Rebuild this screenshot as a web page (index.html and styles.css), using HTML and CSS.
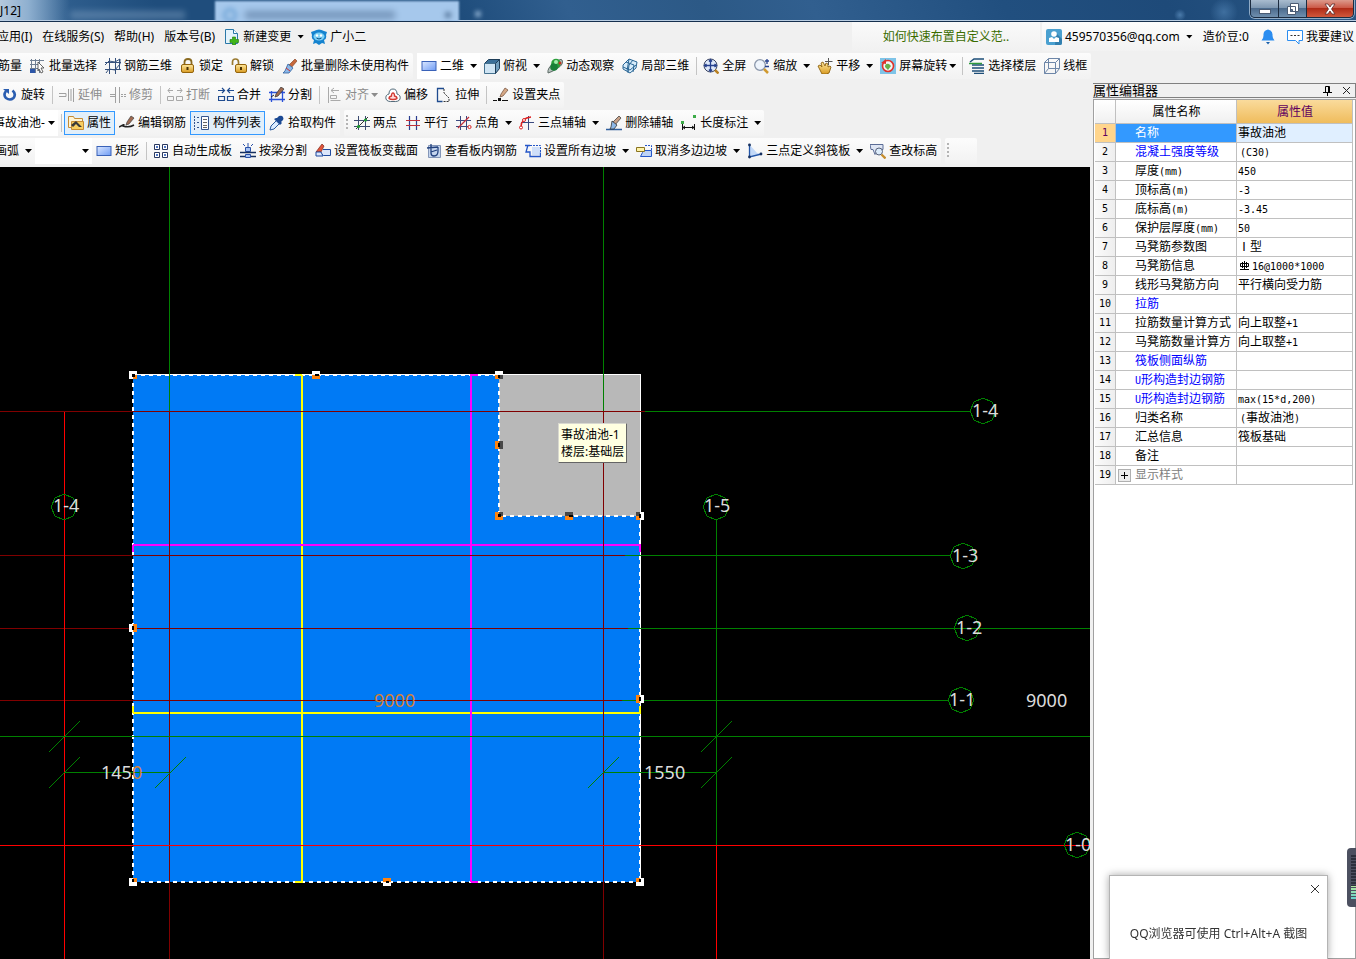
FILE: index.html
```html
<!DOCTYPE html>
<html lang="zh-CN">
<head>
<meta charset="utf-8">
<title>属性编辑器</title>
<link rel="stylesheet" href="styles.css">
</head>
<body>
<svg class="sprite" aria-hidden="true">
  <defs>
    <linearGradient id="blueFill" x1="0" y1="0" x2="1" y2="1"><stop offset="0" stop-color="#dce8ff"/><stop offset="1" stop-color="#6f9cf5"/></linearGradient>
    <linearGradient id="goldFill" x1="0" y1="0" x2="0" y2="1"><stop offset="0" stop-color="#ffe9a0"/><stop offset="1" stop-color="#d89a20"/></linearGradient>
    <path id="axisMark" d="M0-13L9-9 13 0 9 9 0 13-9 9-13 0-9-9z"/>
  </defs>
  <symbol id="newdoc" viewBox="0 0 16 16"><path d="M1.500 .5h8l4 4v10h-12z" fill="#e4f3fc" stroke="#2a78a8"/><path d="M9.500 .5v4h4" fill="#fff" stroke="#2a78a8"/><path d="M8.500 8h3v2.500h3v3h-3v2.500h-3v-2.500h-2.500v-3h2.500z" fill="#3fb618" stroke="#1f7a08" stroke-width=".6"/></symbol>
  <symbol id="mascot" viewBox="0 0 16 16"><path d="M0 3l3-1q5-3 10 0l3 1-1 3q1 4-2 5l1 4-3-1-3 2-3-2-3 1 1-4q-3-1-2-5z" fill="#1583cf"/><ellipse cx="8" cy="7.500" rx="5.500" ry="4" fill="#7fd2f6"/><circle cx="6" cy="6.500" r="1.200" fill="#fff"/><circle cx="10" cy="6.500" r="1.200" fill="#fff"/><path d="M5.500 9q2.500 2 5 0" stroke="#084d86" fill="none"/></symbol>
  <symbol id="user" viewBox="0 0 16 16"><rect width="16" height="16" rx="2" fill="#4aa0d0"/><path d="M10 4l6 6v4q0 2-2 2h-5z" fill="#327fae"/><circle cx="8" cy="5" r="2.800" fill="#fff"/><path d="M3 9l3-1 2 2 2-2 3 1v4h-10z" fill="#fff"/></symbol>
  <symbol id="bell" viewBox="0 0 16 16"><path d="M8 .5q5 1 4.500 6 0 3 2 5h-13q2-2 2-5-.5-5 4.500-6z" fill="#2b8df0"/><path d="M6 13h4l-2 2.500z" fill="#1a5faa"/></symbol>
  <symbol id="bubble" viewBox="0 0 16 16"><path d="M.5 1.500h15v10h-3.500v3.500l-3.500-3.500h-8z" fill="#fff" stroke="#2b8df0"/><path d="M3.500 6.500h2m1.500 0h2m1.500 0h2" stroke="#333"/></symbol>
  <symbol id="gridsel" viewBox="0 0 16 16"><path d="M1.500 1v14M5.500 1v14M9.500 1v14M0 2.500h14M0 6.500h9M0 10.500h9" stroke="#6f7f93" fill="none"/><path d="M0 11h5v4h-5z" fill="#2c56a8"/><path d="M8 4l6 6h-3l2 4-2 1-2-4-1 2z" fill="#fff" stroke="#444" stroke-width=".8"/></symbol>
  <symbol id="grid3d" viewBox="0 0 16 16"><path d="M4.500 0v16M10.500 0v16M0 4.500h16M0 11.500h16M1 15l3-4 6 1 5-6v-5l-5 3-6-1-4 4M14.500 1v11" stroke="#36517c" fill="none"/></symbol>
  <symbol id="lock" viewBox="0 0 16 16"><path d="M4.500 8v-4q0-3 3.500-3t3.500 3v4" fill="none" stroke="#8a6a20" stroke-width="1.800"/><rect x="1.500" y="6.500" width="12" height="8" rx="1.500" fill="url(#goldFill)" stroke="#94640c"/><path d="M7.500 9v3" stroke="#4a3204" stroke-width="2"/></symbol>
  <symbol id="unlock" viewBox="0 0 16 16"><path d="M1.500 7v-3q0-3 3-3t3 3v3" fill="none" stroke="#9a7a30" stroke-width="1.700"/><rect x="4.500" y="6.500" width="11" height="8" rx="1.500" fill="url(#goldFill)" stroke="#94640c"/><path d="M10 9v3" stroke="#4a3204" stroke-width="2"/></symbol>
  <symbol id="brush" viewBox="0 0 16 16"><path d="M13 1l2 2-6 7-3-2z" fill="#c7683c" stroke="#7a3a1c" stroke-width=".6"/><path d="M6 6l5 4-4 5h-6l2-2z" fill="#8db8e8" stroke="#2f5f9e" stroke-width=".8"/><path d="M4 10l4 3" stroke="#c33"/></symbol>
  <symbol id="rect" viewBox="0 0 16 16"><rect x="1" y="3.500" width="14" height="9" fill="url(#blueFill)" stroke="#3a62b8"/></symbol>
  <symbol id="cube" viewBox="0 0 16 16"><path d="M.5 5.500l4-4h11l-4 4z" fill="#3a6f98" stroke="#1d3d58"/><path d="M.5 5.500h11v10h-11z" fill="#cfe4f3" stroke="#44718f"/><path d="M11.500 5.500l4-4v9l-4 5z" fill="#6f9dbd" stroke="#1d3d58"/></symbol>
  <symbol id="orbit" viewBox="0 0 16 16"><path d="M1 15q-1-5 6-10t8-3q2 4-4 8t-10 5z" fill="#b9c4c0" stroke="#5d6a66"/><circle cx="9" cy="5.500" r="4.800" fill="#2ca03c"/><circle cx="7" cy="9" r="3.800" fill="#188038"/><circle cx="9" cy="4" r="2" fill="#a0ecac"/><circle cx="13" cy="5" r="1.500" fill="#c53322"/></symbol>
  <symbol id="local3d" viewBox="0 0 16 16"><path d="M1 7l6-6 8 3-1 6-6 5-7-4z" fill="#d8ecfa" stroke="#2a6695"/><path d="M4 4l8 3-1 7M7 1l-2 12M11 2l-4 5-1 8M1 9l7 3 6-5" fill="none" stroke="#2a6695"/></symbol>
  <symbol id="full" viewBox="0 0 16 16"><circle cx="7.500" cy="7.500" r="6.500" fill="#dfe9fa" stroke="#3b4664"/><path d="M7.500 2v11M2 7.500h11M6 3.500l1.500-2 1.500 2M6 11.500l1.500 2 1.500-2M3.500 6l-2 1.500 2 1.500M11.500 6l2 1.500-2 1.500" stroke="#26418f" fill="none" stroke-width="1.300"/><path d="M12 12l3.500 3.500" stroke="#b98224" stroke-width="2.500"/></symbol>
  <symbol id="zoom" viewBox="0 0 16 16"><circle cx="6" cy="7" r="5.300" fill="#eef4fc" stroke="#8b97ab" stroke-width="1.300"/><path d="M10 11l4 4" stroke="#d09a30" stroke-width="2.500"/><path d="M13 1v5M11 3h4M11 8.500h4" stroke="#26418f" stroke-width="1.300"/></symbol>
  <symbol id="hand" viewBox="0 0 16 16"><path d="M1 8l2-1 2 2-1-4 2-1 2 4 1-3 2 1v3l2-1 1 1-2 6q-2 1.500-7 1z" fill="url(#goldFill)" stroke="#8e6210" stroke-width=".9"/><path d="M11.500 0v7M8 3.500h7.500" stroke="#555"/></symbol>
  <symbol id="screenrot" viewBox="0 0 16 16"><rect width="16" height="16" fill="#7ec4e8"/><circle cx="8" cy="8" r="5.500" fill="#f2f6f8" stroke="#e0322b" stroke-width="1.600"/><path d="M5 9q0-4 4-3l2 2-3 4z" fill="#68b048"/><path d="M1 5l5-4v5z" fill="#e0322b"/></symbol>
  <symbol id="floors" viewBox="0 0 16 16"><path d="M1 4l4-3h10M3 7h12M3 10h12M3 13h12M5 15.500h10" stroke="#1d4e78" stroke-width="1.500" fill="none"/><path d="M0 5.500h13" stroke="#2f9a3c" stroke-width="1.500"/></symbol>
  <symbol id="wire" viewBox="0 0 16 16"><path d="M.5 4.500l4-4h11l-4 4zM.5 4.500v11h11v-11M15.500.5v10l-4 5M4.500.5v10h11M4.500 10.500l-4 5" fill="none" stroke="#6d86a8"/></symbol>
  <symbol id="rotate" viewBox="0 0 16 16"><path d="M4 4q-3 4 0 7 4 3 7.500 0 3-4-1-7.500" fill="none" stroke="#2a5db0" stroke-width="2.600"/><path d="M1 2h6v5z" fill="#2a5db0"/></symbol>
  <symbol id="extend" viewBox="0 0 16 16"><path d="M0 6.500h7v3h-7M9.500 2v12M14.500 1v14M12 2v12" stroke="#a0a0a0" fill="none"/></symbol>
  <symbol id="trim" viewBox="0 0 16 16"><path d="M0 7.500h5M0 9.500h5M5.500 0v16M9.500 0v16" stroke="#a0a0a0" fill="none"/><path d="M11 7.500h5M11 9.500h5" stroke="#a0a0a0" stroke-dasharray="2 1"/></symbol>
  <symbol id="break" viewBox="0 0 16 16"><path d="M1 3.500h5M10 3.500h5M3 1L1 3.500 3 6M13 1l2 2.500L13 6M.5 9.500h6v4h-6zM9.500 9.500h6v4h-6z" stroke="#a8a8a8" fill="none"/></symbol>
  <symbol id="merge" viewBox="0 0 16 16"><path d="M0 3.500h6M10 3.500h6M4 1l2.500 2.500L4 6M12 1L9.500 3.500 12 6M.5 9.500h6v4h-6zM9.500 9.500h6v4h-6z" stroke="#1f4b8f" fill="none" stroke-width="1.200"/></symbol>
  <symbol id="split" viewBox="0 0 16 16"><path d="M0 5.500h16M0 12.500h16M2.500 4v11M13.500 4v11" stroke="#2b52d8" stroke-width="1.300" fill="none"/><path d="M12 0l3 2-6 7-3 1 1-3z" fill="#a06a50" stroke="#333" stroke-width=".7"/><path d="M2 10l3-2" stroke="#222"/></symbol>
  <symbol id="align" viewBox="0 0 16 16"><path d="M2.500 0v16" stroke="#aaa"/><path d="M5 3.500h8M8 1L5 3.500 8 6M4.500 8.500h6v3h-6zM4.500 13.500h10" stroke="#aaa" fill="none"/></symbol>
  <symbol id="offset" viewBox="0 0 16 16"><path d="M1 12q-1-4 3-5 0-5 4-5t4 5q4 1 3 5-1 3-7 2.500-6 .5-7-2.500z" fill="#fff" stroke="#536b7a"/><path d="M4 11.500q0-2 2.500-2.500 0-3 1.500-3t1.500 3q2.500.5 2.500 2.500-1 1-4 1t-4-1z" fill="#ffdede" stroke="#d23a33" stroke-width="1.300"/></symbol>
  <symbol id="stretch" viewBox="0 0 16 16"><path d="M8 1.500h-6.500v13h5" fill="none" stroke="#1f4b8f" stroke-width="1.300"/><path d="M8 2v4l5 5v3.500h-6" fill="none" stroke="#333" stroke-dasharray="2 1"/></symbol>
  <symbol id="pen" viewBox="0 0 16 16"><path d="M0 13.500h4M9 13.500h6" stroke="#111"/><path d="M12 1l3 2-5 6-3 1 1-3z" fill="#d5a886" stroke="#6e4a36" stroke-width=".7"/><path d="M5 11h3v3h-3z" fill="#111"/></symbol>
  <symbol id="rebar" viewBox="0 0 16 16"><path d="M0 12q7-4 4-1 6 2 11-1" stroke="#222" stroke-width="1.500" fill="none"/><path d="M12 1l3 2-5 6-3 1 1-3z" fill="#a06a50" stroke="#444" stroke-width=".7"/></symbol>
  <symbol id="props" viewBox="0 0 16 16"><path d="M.5 1.500h5l1 2h8v9h-14z" fill="#fff4d4" stroke="#c68c34"/><path d="M3.500 6.500h12v8h-12z" fill="#f8cf62" stroke="#c68c34"/><path d="M3 10l5-4 6 6h-3l-3-3-3 3z" fill="#3a3a3a"/></symbol>
  <symbol id="list" viewBox="0 0 16 16"><path d="M.5 1v14M3 2.500h2M3 7.500h2M3 12.500h2" stroke="#34558f" stroke-dasharray="2 1"/><path d="M7.500 1.500h7v13h-7z" fill="#fff" stroke="#34558f"/><path d="M9 4.500h4M9 7.500h4M9 10.500h4M9 12.500h4" stroke="#666"/></symbol>
  <symbol id="dropper" viewBox="0 0 16 16"><path d="M1 15l1-4 6-6 3 3-6 6z" fill="#dcecff" stroke="#2a5a9c"/><path d="M8 3l2-2q3-1 4 1t0 3l-2 2 1 1-2 2-6-6 2-1z" fill="#1c4a94"/></symbol>
  <symbol id="twopt" viewBox="0 0 16 16"><path d="M4.500 1v14M11.500 1v14M0 5.500h16M0 11.500h16" stroke="#3b4a70" fill="none"/><path d="M2 14L14 2" stroke="#333"/><circle cx="4.500" cy="11.500" r="1.600" fill="#1d9a30"/><circle cx="11.500" cy="5" r="1.600" fill="#1d9a30"/></symbol>
  <symbol id="parallel" viewBox="0 0 16 16"><path d="M4.500 1v14M11.500 1v14" stroke="#2b3d90" stroke-width="1.200"/><path d="M1 5.500h14M1 10.500h14" stroke="#c0303c" stroke-width="1.200"/></symbol>
  <symbol id="ptangle" viewBox="0 0 16 16"><path d="M4.500 1v14M10.500 1v14M0 5.500h15M0 11.500h12" stroke="#3b4a80" fill="none"/><path d="M2 13L13 2" stroke="#c0303c" stroke-width="1.200"/><circle cx="13.500" cy="12" r="1.600" fill="none" stroke="#d22"/></symbol>
  <symbol id="threept" viewBox="0 0 16 16"><path d="M9.500 1v14M2 7.500h13" stroke="#3b4a80"/><path d="M2 12q0-9 10-10" fill="none" stroke="#d22" stroke-width="1.300"/><circle cx="2" cy="12.500" r="1.500" fill="#fff" stroke="#d22"/><circle cx="5" cy="5" r="1.500" fill="#fff" stroke="#d22"/></symbol>
  <symbol id="erase" viewBox="0 0 16 16"><path d="M0 14.500h16" stroke="#2f5f9e" stroke-width="1.500"/><path d="M13 1l2 2-6 7-3-2z" fill="#c7a088" stroke="#333" stroke-width=".7"/><path d="M6 6l5 4-3 4h-4l1-2z" fill="#8db8e8" stroke="#333" stroke-width=".8"/></symbol>
  <symbol id="dim" viewBox="0 0 16 16"><path d="M1.500 9v6M13.500 9v6M2 12.500h11M4 11l-2 1.500 2 1.500M11 11l2 1.500-2 1.500" stroke="#111" fill="none"/><path d="M0 6h3v3h-3zM12 0h3v3h-3z" fill="#3cab48"/></symbol>
  <symbol id="autogen" viewBox="0 0 16 16"><path d="M1.500 1.500h5v5h-5zM9.500 1.500h5v5h-5zM1.500 9.500h5v5h-5zM9.500 9.500h5v5h-5z" fill="#fff" stroke="#28375f"/><path d="M3 3h2v2h-2zM11 3h2v2h-2zM3 11h2v2h-2zM11 11h2v2h-2z" fill="#5078c8"/></symbol>
  <symbol id="beam" viewBox="0 0 16 16"><path d="M8 0v5M3 1l2 2M13 1l-2 2" stroke="#2b52a8"/><path d="M5.500 4.500h5v4h-5zM5.500 11.500h5v3h-5z" fill="#a8c4f4" stroke="#2b52a8"/><path d="M0 9.500h16M0 13.500h5M11 13.500h5" stroke="#16305f" stroke-width="1.400"/></symbol>
  <symbol id="section" viewBox="0 0 16 16"><path d="M8 6.500h7.500v6h-7l-2-2" fill="#dbe6fb" stroke="#1f4b9f"/><path d="M1 9l6-8 2 2-3 6z" fill="#e2543a" stroke="#7a2418" stroke-width=".7"/><path d="M1 9l5 0 2 4h-7z" fill="#dbe6fb" stroke="#1f4b9f"/></symbol>
  <symbol id="viewbar" viewBox="0 0 16 16"><path d="M2.500 2.500h12v12h-12z" fill="#c5d5ee" stroke="#8496b8"/><path d="M1 5l11-1M5 1v9q0 3 3 3 4 0 4-5v-4M5 9l6-2" fill="none" stroke="#23427e" stroke-width="1.300"/></symbol>
  <symbol id="slope" viewBox="0 0 16 16"><path d="M7 4h8v8h-8z" fill="#cfdff9"/><path d="M0 2.500h5M3 2l-2 7h4v4.500h10.500v-4" fill="none" stroke="#2456c8" stroke-width="1.300"/><path d="M5 2.500h10.500v9" fill="none" stroke="#2456c8" stroke-dasharray="2 1"/></symbol>
  <symbol id="unslope" viewBox="0 0 16 16"><path d="M7.500 7.500h8v6h-11l2-4z" fill="#bcd2f6" stroke="#2456c8"/><path d="M.5 4.500h8v4h-8z" fill="#fff3a8" stroke="#8a7420"/><path d="M9 2.500h6.500v5" stroke="#2456c8" fill="none" stroke-dasharray="2 1"/></symbol>
  <symbol id="incl" viewBox="0 0 16 16"><path d="M2 1l8 9 5 1-13 4z" fill="#c3d9f8"/><path d="M2.500 1v13l12-3" fill="none" stroke="#2456a8" stroke-width="1.300"/><circle cx="2.500" cy="2" r="1.400" fill="#16305f"/><circle cx="2.500" cy="14" r="1.400" fill="#16305f"/><circle cx="14" cy="11" r="1.400" fill="#16305f"/></symbol>
  <symbol id="elev" viewBox="0 0 16 16"><path d="M0 1.500h13v5h-4l-4 5-2-5h-2z" fill="#dfe6f4" stroke="#5b6c96"/><circle cx="9" cy="8.500" r="3.500" fill="#dcecfb" stroke="#555f78"/><path d="M11.500 11.500l4 4" stroke="#c58d2c" stroke-width="2.300"/></symbol>
</svg>

<header class="titlebar">
  <span class="caption">J12]</span>
  <span class="ghost-caption"></span>
  <span class="ghost-tab"><i class="ghost-ring"></i><i class="ghost-text"></i><i class="ghost-close"></i></span>
  <i class="ghost-plus"></i>
  <div class="window-buttons">
    <button class="win" aria-label="最小化"><svg width="14" height="12"><rect x="1.500" y="6.500" width="11" height="4" fill="#fff" stroke="#4b5c74"/></svg></button>
    <button class="win" aria-label="还原"><svg width="14" height="14"><path d="M4.500 1.500h8v8h-8zM1.500 4.500h8v8h-8z" fill="#fff" stroke="#4b5c74"/><path d="M4.500 7.500h2v2h-2z" fill="#5a7598" stroke="#4b5c74"/></svg></button>
    <button class="win win-close" aria-label="关闭窗口"><svg width="14" height="12"><path d="M2 1h3l2 3 2-3h3l-3.500 5 3.500 5h-3l-2-3-2 3h-3l3.500-5z" fill="#fff" stroke="#5d2a28" stroke-width=".8"/></svg></button>
  </div>
</header>

<nav class="menubar">
  <button class="menu">应用(I)</button>
  <button class="menu">在线服务(S)</button>
  <button class="menu">帮助(H)</button>
  <button class="menu">版本号(B)</button>
  <button class="tool"><svg><use href="#newdoc"/></svg>新建变更<i class="caret"></i></button>
  <button class="tool"><svg><use href="#mascot"/></svg>广小二</button>
  <div class="account">
    <a class="tip-link" href="#">如何快速布置自定义范..</a>
    <div class="bar user-bar">
      <button class="tool"><svg><use href="#user"/></svg><span class="mail">459570356@qq.com</span><i class="caret"></i></button>
      <button class="tool">造价豆:0</button>
      <button class="tool"><svg><use href="#bell"/></svg></button>
      <button class="tool"><svg><use href="#bubble"/></svg>我要建议</button>
    </div>
  </div>
</nav>

<div class="row row-view">
  <div class="bar">
    <button class="tool">筋量</button>
    <button class="tool"><svg><use href="#gridsel"/></svg>批量选择</button>
    <button class="tool"><svg><use href="#grid3d"/></svg>钢筋三维</button>
    <button class="tool"><svg><use href="#lock"/></svg>锁定</button>
    <button class="tool"><svg><use href="#unlock"/></svg>解锁</button>
    <button class="tool"><svg><use href="#brush"/></svg>批量删除未使用构件</button>
  </div>
  <div class="bar">
    <button class="tool current"><svg><use href="#rect"/></svg>二维<i class="caret"></i></button>
    <button class="tool"><svg><use href="#cube"/></svg>俯视<i class="caret"></i></button>
    <button class="tool"><svg><use href="#orbit"/></svg>动态观察</button>
    <button class="tool"><svg><use href="#local3d"/></svg>局部三维</button>
    <i class="sep"></i>
    <button class="tool"><svg><use href="#full"/></svg>全屏</button>
    <button class="tool"><svg><use href="#zoom"/></svg>缩放<i class="caret"></i></button>
    <button class="tool"><svg><use href="#hand"/></svg>平移<i class="caret"></i></button>
    <button class="tool"><svg><use href="#screenrot"/></svg>屏幕旋转<i class="caret tight"></i></button>
    <i class="sep"></i>
    <button class="tool"><svg><use href="#floors"/></svg>选择楼层</button>
    <button class="tool"><svg><use href="#wire"/></svg>线框</button>
  </div>
</div>

<div class="workspace">
  <main class="left">
    <div class="row row-edit">
      <div class="bar">
        <button class="tool"><svg><use href="#rotate"/></svg>旋转</button>
        <i class="sep"></i>
        <button class="tool" disabled><svg><use href="#extend"/></svg>延伸</button>
        <button class="tool" disabled><svg><use href="#trim"/></svg>修剪</button>
        <i class="sep"></i>
        <button class="tool" disabled><svg><use href="#break"/></svg>打断</button>
        <button class="tool"><svg><use href="#merge"/></svg>合并</button>
        <button class="tool"><svg><use href="#split"/></svg>分割</button>
        <i class="sep"></i>
        <button class="tool" disabled><svg><use href="#align"/></svg>对齐<i class="caret tight"></i></button>
        <button class="tool"><svg><use href="#offset"/></svg>偏移</button>
        <button class="tool"><svg><use href="#stretch"/></svg>拉伸</button>
        <i class="sep"></i>
        <button class="tool"><svg><use href="#pen"/></svg>设置夹点</button>
      </div>
    </div>
    <div class="row row-member">
      <div class="bar">
        <div class="combo"><select aria-label="构件"><option>事故油池-</option></select><i class="caret"></i></div>
        <i class="sep"></i>
        <button class="tool pressed"><svg><use href="#props"/></svg>属性</button>
        <button class="tool"><svg><use href="#rebar"/></svg>编辑钢筋</button>
        <button class="tool pressed"><svg><use href="#list"/></svg>构件列表</button>
        <button class="tool"><svg><use href="#dropper"/></svg>拾取构件</button>
      </div>
      <div class="bar">
        <i class="grip"></i>
        <button class="tool"><svg><use href="#twopt"/></svg>两点</button>
        <button class="tool"><svg><use href="#parallel"/></svg>平行</button>
        <button class="tool"><svg><use href="#ptangle"/></svg>点角<i class="caret"></i></button>
        <button class="tool"><svg><use href="#threept"/></svg>三点辅轴<i class="caret"></i></button>
        <button class="tool"><svg><use href="#erase"/></svg>删除辅轴</button>
        <button class="tool"><svg><use href="#dim"/></svg>长度标注<i class="caret"></i></button>
      </div>
    </div>
    <div class="row row-raft">
      <div class="bar">
        <button class="tool">画弧<i class="caret"></i></button>
        <div class="combo combo-empty"><select aria-label="绘制方式"><option></option></select><i class="caret"></i></div>
        <button class="tool"><svg><use href="#rect"/></svg>矩形</button>
        <i class="sep"></i>
        <button class="tool"><svg><use href="#autogen"/></svg>自动生成板</button>
        <button class="tool"><svg><use href="#beam"/></svg>按梁分割</button>
        <button class="tool"><svg><use href="#section"/></svg>设置筏板变截面</button>
        <button class="tool"><svg><use href="#viewbar"/></svg>查看板内钢筋</button>
        <button class="tool"><svg><use href="#slope"/></svg>设置所有边坡<i class="caret"></i></button>
        <button class="tool"><svg><use href="#unslope"/></svg>取消多边边坡<i class="caret"></i></button>
        <button class="tool"><svg><use href="#incl"/></svg>三点定义斜筏板<i class="caret"></i></button>
        <button class="tool"><svg><use href="#elev"/></svg>查改标高</button>
      </div>
      <div class="bar bar-stub"><i class="grip"></i></div>
    </div>

    <section class="canvas">
      <svg class="drawing" role="img" aria-label="筏板平面图">
        <g transform="translate(0 -167)" shape-rendering="crispEdges" fill="none">
          <path d="M133 375h366v141h141v366H133z" fill="#007af5"/>
          <path d="M499 375h141v141H499z" fill="#b8b8b8"/>
          <path d="M133 374.500h508M640.500 375v508" stroke="#fff"/>
          <path d="M133 375.500h366M639.500 516v366" stroke="#fff" stroke-dasharray="4 4"/>
          <path d="M133 375v507M133 882h507M499 375v141h141" stroke="#fff" stroke-width="2" stroke-dasharray="4 4"/>
          <g stroke-width="2">
            <path d="M302 375v508M133 713h508M295 375h7M295 882h7M133 706v7M640 706v7" stroke="#ff0"/>
            <path d="M471 374v508M133 545h508M471 375h7M471 882h7M133 545v7M640 545v7" stroke="#f0f"/>
          </g>
          <path d="M169.500 411V959M603.500 411V959M0 411.500H645M0 555.500H625M0 628.500H628M0 700.500H622" stroke="#800000"/>
          <path d="M169.500 167V411M603.500 167V411M645 411.500H971M625 555.500H951M628 628.500H2000M622 700.500H948M716.500 519V845M0 736.500H2000M64 772.500H169M603 772.500H716" stroke="#008000"/>
          <path d="M64.500 412V959M716.500 845V959M0 845.500H1090" stroke="#f00"/>
          <path d="M49 752l31-31M49 788l31-31M155 788l31-31M588 788l31-31M701 752l31-31M701 788l31-31" stroke="#008000"/>
          <g stroke="#008000">
            <use href="#axisMark" x="64" y="507"/><use href="#axisMark" x="716" y="507"/><use href="#axisMark" x="983" y="411"/>
            <use href="#axisMark" x="963" y="556"/><use href="#axisMark" x="967" y="628"/><use href="#axisMark" x="961" y="700"/><use href="#axisMark" x="1077" y="845"/>
          </g>
          <g fill="#fff">
            <path d="M129 371h8v8h-8zM312 371h8v4h-8zM495 371h8v4h-8zM640 512h4v8h-4zM640 695h4v8h-4zM636 878h8v8h-8zM383 878h8v8h-8zM129 878h8v8h-8zM129 624h4v8h-4z"/>
            <path d="M133 375h4v4h-4zM312 375h8v4h-8zM495 375h4v4h-4zM495 441h4v8h-4zM495 512h8v8h-8zM565 516h8v4h-8zM636 516h4v4h-4zM636 695h4v8h-4zM636 878h4v4h-4zM383 878h8v4h-8zM133 878h4v4h-4zM133 624h4v8h-4z" fill="#ff8410"/>
            <path d="M499 375h4v4h-4zM499 441h4v8h-4zM499 512h4v4h-4zM565 512h8v4h-8zM636 512h4v4h-4z" fill="#484848"/>
            <path d="M132 374h3v3h-3zM315 374h4v2h-4zM498 375h2v3h-2zM498 443h2v4h-2zM498 514h3v3h-3zM569 515h4v2h-4zM639 514h2v4h-2zM639 697h2v4h-2zM639 879h2v3h-2zM386 881h3v2h-3zM132 879h2v3h-2zM132 626h2v4h-2z" fill="#000"/>
          </g>
        </g>
        <g class="labels" transform="translate(0 -167)">
          <text x="53" y="512">1-4</text>
          <text x="704" y="512">1-5</text>
          <text x="972" y="417">1-4</text>
          <text x="952" y="562">1-3</text>
          <text x="956" y="634">1-2</text>
          <text x="949" y="706">1-1</text>
          <text x="1065" y="851">1-0</text>
          <text x="1026" y="707">9000</text>
          <text x="374" y="707" class="over">9000</text>
          <text x="101" y="779">145<tspan class="over">0</tspan></text>
          <text x="644" y="779">1550</text>
        </g>
      </svg>
      <div class="tooltip" role="tooltip">事故油池-1<br>楼层:基础层</div>
    </section>
  </main>

  <aside class="panel">
    <div class="panel-title">
      <h2>属性编辑器</h2>
      <button aria-label="固定"><svg width="9" height="10"><path d="M2.500 6v-5.500h4v5.500M5.500 0v6M0 6.500h9M4.500 7v3" fill="none" stroke="#000"/></svg></button>
      <button aria-label="关闭面板"><svg width="9" height="9"><path d="M1 1l7 7M8 1l-7 7" stroke="#222"/></svg></button>
    </div>
    <div class="panel-body">
      <table>
        <colgroup><col class="c-num"><col class="c-name"><col></colgroup>
        <thead><tr><th></th><th>属性名称</th><th class="val-head">属性值</th></tr></thead>
        <tbody>
          <tr class="selected"><th>1</th><td>名称</td><td>事故油池</td></tr>
          <tr class="key"><th>2</th><td>混凝土强度等级</td><td><span class="mono in">(C30)</span></td></tr>
          <tr><th>3</th><td>厚度<span class="mono">(mm)</span></td><td><span class="mono">450</span></td></tr>
          <tr><th>4</th><td>顶标高<span class="mono">(m)</span></td><td><span class="mono">-3</span></td></tr>
          <tr><th>5</th><td>底标高<span class="mono">(m)</span></td><td><span class="mono">-3.45</span></td></tr>
          <tr><th>6</th><td>保护层厚度<span class="mono">(mm)</span></td><td><span class="mono">50</span></td></tr>
          <tr><th>7</th><td>马凳筋参数图</td><td>Ⅰ型</td></tr>
          <tr><th>8</th><td>马凳筋信息</td><td><svg class="bar-sign" width="11" height="10"><path d="M5.500 0v8M1 8.500h9M1.500 2.500h8v3h-8zM3.500 1v6M7.500 1v6" fill="none" stroke="#000"/></svg><span class="mono">16@1000*1000</span></td></tr>
          <tr><th>9</th><td>线形马凳筋方向</td><td>平行横向受力筋</td></tr>
          <tr class="key"><th>10</th><td>拉筋</td><td></td></tr>
          <tr><th>11</th><td>拉筋数量计算方式</td><td>向上取整<span class="mono">+1</span></td></tr>
          <tr><th>12</th><td>马凳筋数量计算方</td><td>向上取整<span class="mono">+1</span></td></tr>
          <tr class="key"><th>13</th><td>筏板侧面纵筋</td><td></td></tr>
          <tr class="key"><th>14</th><td><span class="mono">U</span>形构造封边钢筋</td><td></td></tr>
          <tr class="key"><th>15</th><td><span class="mono">U</span>形构造封边钢筋</td><td><span class="mono">max(15*d,200)</span></td></tr>
          <tr><th>16</th><td>归类名称</td><td><span class="mono in">(</span>事故油池<span class="mono">)</span></td></tr>
          <tr><th>17</th><td>汇总信息</td><td>筏板基础</td></tr>
          <tr><th>18</th><td>备注</td><td></td></tr>
          <tr class="muted"><th>19</th><td class="tree"><button aria-label="展开显示样式"><svg width="7" height="7"><path d="M0 3.500h7M3.500 0v7" stroke="#000"/></svg></button>显示样式</td><td></td></tr>
        </tbody>
      </table>
    </div>
  </aside>
</div>

<div class="toast" role="status">
  <button aria-label="关闭提示"><svg width="10" height="10"><path d="M1 1l8 8M9 1l-8 8" stroke="#333"/></svg></button>
  <p>QQ浏览器可使用 Ctrl+Alt+A 截图</p>
</div>
<div class="meter"><i></i></div>
</body>
</html>
```
FILE: styles.css
```css
* { box-sizing: border-box; }

body {
  margin: 0;
  height: 100vh;
  display: flex;
  flex-direction: column;
  overflow: hidden;
  background: #f0f0f0;
  color: #000;
  font: 12px/16px "Noto Sans", "Noto Sans CJK SC", sans-serif;
}

button, select {
  font: inherit;
  color: inherit;
  border: 0;
  background: none;
  padding: 0;
  white-space: nowrap;
}

.sprite { position: absolute; width: 0; height: 0; }

/* title bar */
.titlebar {
  position: relative;
  flex: none;
  display: flex;
  align-items: flex-start;
  height: 22px;
  overflow: hidden;
  border-bottom: 1px solid #16304e;
  box-shadow: inset 0 -1px #b9cde2;
  background:
    radial-gradient(circle at 1224px 12px, #3f6f9f 0, transparent 14px),
    radial-gradient(circle at 1180px 15px, #4a7aaa 0, transparent 6px),
    linear-gradient(65deg, #3b6b9b 0, #1f4d7c 12%, #1f4d7c 34%, #315f8f 42%, #2c5986 52%, #315f8f 60%, #214f7f 74%, #1e4a79 86%, #2a5784 100%);
}
.caption {
  padding-top: 3px;
  width: 70px;
  height: 20px;
  background: linear-gradient(90deg, #b4c8dc, #8fb0d0 40%, transparent);
}
.ghost-caption { width: 115px; height: 8px; margin-top: 11px; background: #7f9fc0; opacity: .5; filter: blur(3px); }
.ghost-tab {
  display: flex;
  align-items: center;
  gap: 8px;
  width: 244px;
  height: 22px;
  margin: 1px 0 0 30px;
  padding: 6px 8px 0;
  background: #a6c8ec;
  filter: blur(1px);
}
.ghost-ring { width: 14px; height: 14px; border: 3px solid #6fa4d6; border-radius: 50%; filter: blur(2px); }
.ghost-text { width: 150px; height: 8px; background: #6989ae; filter: blur(3px); opacity: .8; }
.ghost-close { width: 6px; height: 6px; margin-left: auto; background: #5f7fa4; filter: blur(2px); }
.ghost-plus { width: 6px; height: 6px; margin: 11px 0 0 16px; background: #7fa3c6; filter: blur(2px); }
.window-buttons {
  display: flex;
  margin: 0 2px 0 auto;
  height: 18px;
  border: 1px solid #1c2c40;
  border-top: 0;
  border-radius: 0 0 5px 5px;
  box-shadow: 0 0 0 1px #8fabc6;
  overflow: hidden;
}
.win {
  display: grid;
  place-items: center;
  width: 28px;
  border-right: 1px solid #1c2c40;
  background: linear-gradient(#a9bccf, #7f98b2 45%, #4c6b8d 50%, #6f8fae);
}
.win-close { width: 46px; border: 0; background: linear-gradient(#dc9a8c, #cc5a48 45%, #b02c18 50%, #d0583c); }

/* menu and tool rows */
.menubar {
  flex: none;
  display: flex;
  height: 29px;
  margin-left: -8px;
  margin-bottom: 2px;
}
.menu { padding: 0 5px; }
.account { display: flex; gap: 2px; margin-left: auto; }
.tip-link {
  display: grid;
  place-items: center;
  width: 188px;
  color: #3a6c00;
  text-decoration: none;
  background: linear-gradient(#fafafa, #f1f1f1);
}
.user-bar { width: 314px; gap: 3px; }

.row { flex: none; display: flex; gap: 4px; height: 26px; margin-bottom: 2px; }
.row-view { margin: 0 0 3px -6px; }
.row-edit { margin-left: -2px; }
.row-member { margin-left: -7px; }
.row-raft { margin-left: -9px; margin-bottom: 3px; }

.bar {
  display: flex;
  border-radius: 2px;
  background: linear-gradient(#fcfcfc, #f2f2f2);
}
.tool {
  display: flex;
  align-items: center;
  gap: 3px;
  padding: 0 4px;
}
.tool > svg { flex: none; width: 16px; height: 16px; }
.tool:disabled { color: #8c8c8c; }
.current { background: #fff; }
.pressed { background: #e2effa; box-shadow: inset 0 0 0 1px #3399ff; margin: 1px 0; }

.caret {
  flex: none;
  width: 7px;
  height: 4px;
  margin: 0 -1px 0 3px;
  background: currentColor;
  clip-path: polygon(0 0, 100% 0, 50% 100%);
}
.caret.tight { margin-left: -1px; }
.sep { flex: none; width: 1px; margin: 4px 2px 4px 3px; background: #c4c4c4; }
.grip {
  flex: none;
  width: 2px;
  margin: 5px 2px;
  background: repeating-linear-gradient(#b4b4b4 0 2px, transparent 2px 4px);
}
.combo { display: flex; align-items: center; width: 65px; padding-right: 4px; background: #fff; }
.combo select { flex: 1; min-width: 0; appearance: none; }
.combo-empty { width: 57px; }
.bar-stub { width: 32px; }

/* workspace */
.workspace { flex: 1; min-height: 0; display: flex; gap: 3px; }
.left { flex: 1; min-width: 0; display: flex; flex-direction: column; }
.canvas { position: relative; flex: 1; min-height: 0; overflow: hidden; background: #000; }
.drawing { display: block; width: 100%; height: 100%; }
.labels { font: 18px "Noto Sans", sans-serif; fill: #dcdcdc; }
.over { fill: #d08038; }
.tooltip {
  position: absolute;
  left: 558px;
  top: 256px;
  padding: 2px 2px 2px;
  line-height: 17px;
  white-space: nowrap;
  background: #ffffe1;
  border: 1px solid #d8d8d0;
  border-right-color: #646464;
  border-bottom-color: #646464;
}

/* property panel */
.panel { flex: none; width: 263px; display: flex; flex-direction: column; padding-top: 1px; }
.panel-title {
  display: flex;
  align-items: center;
  gap: 10px;
  height: 15px;
  padding-right: 4px;
  border: 1px solid #808080;
  border-left: 0;
}
.panel-title h2 { flex: 1; margin: 0; font-size: 13px; line-height: 13px; font-weight: 400; }
.panel-title button { display: flex; }
.panel-body { flex: 1; margin-top: 1px; padding: 0 2px 0 1px; border: 1px solid #a0a0a0; background: #fff; }

table { width: 100%; table-layout: fixed; border-collapse: separate; border-spacing: 0; }
.c-num { width: 21px; }
.c-name { width: 121px; }
th, td {
  height: 19px;
  padding: 0 0 0 1px;
  border-right: 1px solid #c0c0c0;
  border-bottom: 1px solid #c0c0c0;
  font-weight: 400;
  line-height: 18px;
  text-align: left;
  white-space: nowrap;
  overflow: hidden;
}
thead th { height: 24px; text-align: center; background: linear-gradient(#fff, #f0f0f0); }
thead .val-head { color: #600060; background: linear-gradient(#fadb9c, #efbc5c); }
tbody th { padding: 0; text-align: center; font: 10px/18px "DejaVu Sans Mono", monospace; background: linear-gradient(90deg, #fbfbfb, #eee); }
td:nth-child(2) { padding-left: 19px; }
.mono { font: 10px/16px "DejaVu Sans Mono", monospace; }
.in { margin-left: 2px; }
.key td:nth-child(2) { color: #00f; }
.muted td { color: #808080; }
.selected th { color: #600060; background: #ffd58c; }
.selected td:nth-child(2) { color: #fff; background: #3399ff; }
.selected td:nth-child(3) { background: #e0efff; }
.bar-sign { margin: 0 2px 0 1px; vertical-align: -1px; }
td.tree { padding-left: 2px; }
.tree button {
  display: inline-grid;
  place-items: center;
  width: 13px;
  height: 13px;
  margin-right: 4px;
  vertical-align: middle;
  border: 1px solid #b0b0b0;
  background: #ececec;
}

/* overlays at the screen edge */
.toast {
  position: fixed;
  right: 28px;
  bottom: 0;
  width: 219px;
  height: 84px;
  background: #fff;
  border: 1px solid #b4b4b4;
  border-bottom: 0;
  box-shadow: 0 0 8px rgba(0, 0, 0, .35);
  color: #333;
}
.toast button { display: flex; margin: 8px 7px 0 auto; }
.toast p { margin: 32px 0 0; text-align: center; }
.meter {
  position: fixed;
  right: 0;
  bottom: 52px;
  width: 9px;
  height: 59px;
  padding: 7px 0 7px 4px;
  border-radius: 4px 0 0 4px;
  background: #4c5060;
}
.meter i {
  display: block;
  height: 45px;
  background:
    repeating-linear-gradient(transparent 0 2px, #4c5060 2px 3px),
    linear-gradient(#2c303c 0 70%, #b0e8a0 70%, #60d0d0);
}
```
